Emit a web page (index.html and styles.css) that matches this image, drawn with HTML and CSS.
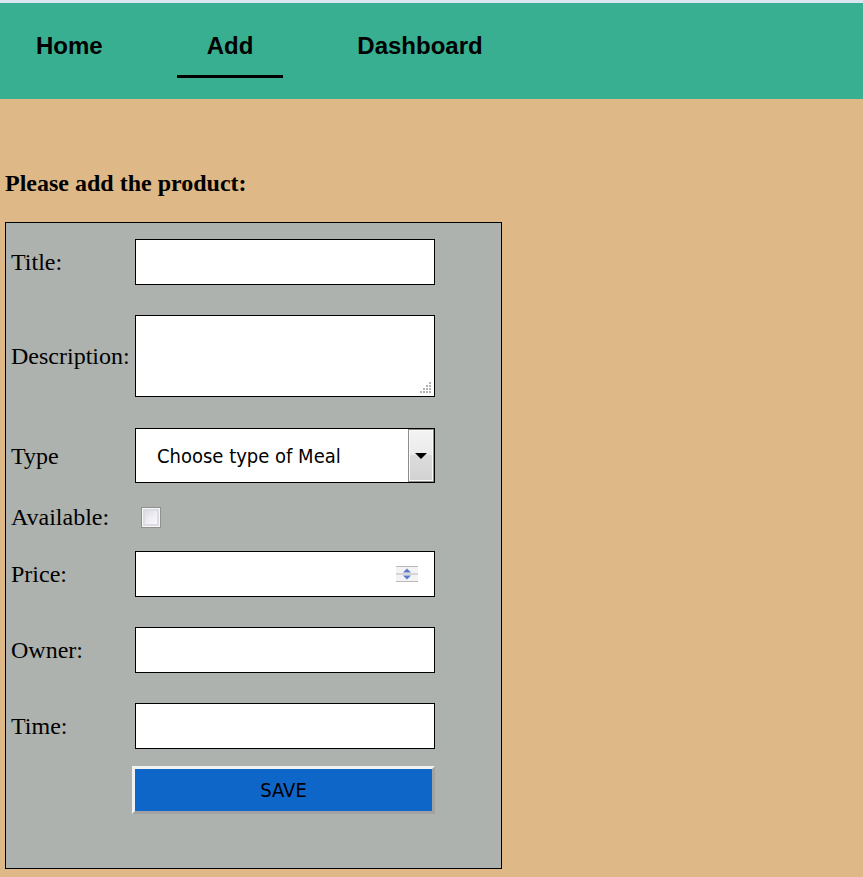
FILE: index.html
```html
<!DOCTYPE html>
<html lang="en">
<head>
<meta charset="utf-8">
<title>Add product</title>
<link rel="stylesheet" href="styles.css">
</head>
<body>
<header class="topbar">
  <nav class="nav">
    <a class="nav-link" href="#">Home</a>
    <a class="nav-link active" href="#">Add</a>
    <a class="nav-link" href="#">Dashboard</a>
  </nav>
</header>
<main class="content">
  <h2 class="page-title">Please add the product:</h2>
  <form class="product-form">
    <div class="row">
      <label class="lbl">Title:</label>
      <input class="field" type="text">
    </div>
    <div class="row row-desc">
      <label class="lbl">Description:</label>
      <span class="wrap">
        <textarea class="field area"></textarea>
        <svg class="grip" width="12" height="12" viewBox="0 0 12 12">
          <g fill="#b4b4b4">
            <rect x="9" y="0" width="2" height="2"/>
            <rect x="9" y="3" width="2" height="2"/><rect x="6" y="3" width="2" height="2"/>
            <rect x="9" y="6" width="2" height="2"/><rect x="6" y="6" width="2" height="2"/><rect x="3" y="6" width="2" height="2"/>
            <rect x="9" y="9" width="2" height="2"/><rect x="6" y="9" width="2" height="2"/><rect x="3" y="9" width="2" height="2"/><rect x="0" y="9" width="2" height="2"/>
          </g>
        </svg>
      </span>
    </div>
    <div class="row row-type">
      <label class="lbl">Type</label>
      <span class="wrap">
        <select class="field sel">
          <option>Choose type of Meal</option>
        </select>
        <span class="sel-btn"><span class="sel-arrow"></span></span>
      </span>
    </div>
    <div class="row row-avail">
      <label class="lbl">Available:</label>
      <input class="check" type="checkbox">
    </div>
    <div class="row row-price">
      <label class="lbl">Price:</label>
      <span class="wrap">
        <input class="field" type="text">
        <svg class="spin" width="22" height="16" viewBox="0 0 22 16">
          <rect x="0" y="0" width="22" height="16" fill="#f3f3f6"/>
          <line x1="0" y1="0.5" x2="22" y2="0.5" stroke="#b9b9b9"/>
          <line x1="0" y1="8" x2="22" y2="8" stroke="#b9b9b9"/>
          <line x1="0" y1="15.5" x2="22" y2="15.5" stroke="#b9b9b9"/>
          <path d="M11 2.5 L15 6.5 H7 Z" fill="#5b79c9"/>
          <path d="M11 13.5 L15 9.5 H7 Z" fill="#5b79c9"/>
        </svg>
      </span>
    </div>
    <div class="row row-gap">
      <label class="lbl">Owner:</label>
      <input class="field" type="text">
    </div>
    <div class="row row-gap">
      <label class="lbl">Time:</label>
      <input class="field" type="text">
    </div>
    <div class="row row-btn">
      <button class="save" type="button">SAVE</button>
    </div>
  </form>
</main>
</body>
</html>
```
FILE: styles.css
```css
html, body {
  margin: 0;
  padding: 0;
}

body {
  background: #deb887;
  font-family: "Liberation Serif", "Times New Roman", serif;
  color: #000;
}

.topbar {
  border-top: 3px solid #dae6f2;
  background: #38af90;
  height: 96px;
}

.nav {
  display: flex;
  align-items: flex-start;
  gap: 44px;
  padding-left: 6px;
}

.nav-link {
  display: block;
  padding: 29px 30px 15px;
  font-family: "Liberation Sans", Arial, sans-serif;
  font-weight: bold;
  font-size: 24px;
  line-height: 28px;
  color: #000;
  text-decoration: none;
  border-bottom: 3px solid transparent;
}

.nav-link.active {
  border-bottom-color: #000;
}

.content {
  padding-left: 5px;
}

.page-title {
  margin: 70px 0 25px;
  font-size: 24px;
  line-height: 28px;
  font-weight: bold;
}

.product-form {
  width: 490px;
  border: 1px solid #000;
  background: #aeb2ae;
  padding: 16px 0 54px 5px;
}

.row {
  display: flex;
  align-items: center;
}

.row-desc {
  margin-top: 30px;
}

.row-type {
  margin-top: 31px;
}

.row-avail {
  margin-top: 20px;
  height: 28px;
}

.row-price {
  margin-top: 20px;
}

.row-gap {
  margin-top: 30px;
}

.row-btn {
  margin-top: 17px;
}

.lbl {
  width: 124px;
  flex: none;
  font-size: 24px;
  line-height: 28px;
}

.wrap {
  position: relative;
  display: block;
  width: 300px;
}

.field {
  display: block;
  width: 300px;
  height: 46px;
  box-sizing: border-box;
  margin: 0;
  padding: 0 4px;
  border: 1px solid #000;
  border-radius: 0;
  background: #fff;
  outline: none;
  font-family: "Liberation Sans", Arial, sans-serif;
  font-size: 16px;
}

.area {
  height: 82px;
  resize: none;
}

.grip {
  position: absolute;
  right: 3px;
  bottom: 3px;
}

.sel {
  height: 55px;
  -webkit-appearance: none;
  appearance: none;
  padding-left: 21px;
  font-family: "DejaVu Sans Condensed", "Liberation Sans", sans-serif;
  font-size: 20px;
  color: #000;
}

.sel-btn {
  position: absolute;
  top: 1px;
  right: 1px;
  bottom: 1px;
  width: 26px;
  box-sizing: border-box;
  border: 1px solid #8c8c8c;
  box-shadow: inset 0 0 0 1px #fafafa;
  background: linear-gradient(#f3f3f3 0%, #ebebeb 48%, #dcdcdc 50%, #d2d2d2 100%);
  display: flex;
  align-items: center;
  justify-content: center;
}

.sel-arrow {
  width: 0;
  height: 0;
  border-left: 6px solid transparent;
  border-right: 6px solid transparent;
  border-top: 6px solid #000;
}

.check {
  -webkit-appearance: none;
  appearance: none;
  margin: 0 0 0 6px;
  width: 20px;
  height: 21px;
  box-sizing: border-box;
  border: 1px solid #909090;
  background: linear-gradient(135deg, #d3d4dc, #f2f2f6 60%, #fdfdfd);
  box-shadow: inset 0 0 0 1px #f7f7f7, inset 0 0 0 3px #dcdde4;
}

.spin {
  position: absolute;
  left: 261px;
  top: 15px;
}

.save {
  margin: 0 0 0 121px;
  width: 303px;
  height: 48px;
  box-sizing: border-box;
  border: 3px solid;
  border-color: #f1f1f1 #a2a2a2 #a2a2a2 #f1f1f1;
  background: #0f66c9;
  color: #000;
  font-family: "DejaVu Sans Condensed", "Liberation Sans", sans-serif;
  font-size: 20px;
  padding: 0;
  border-radius: 0;
}
```
